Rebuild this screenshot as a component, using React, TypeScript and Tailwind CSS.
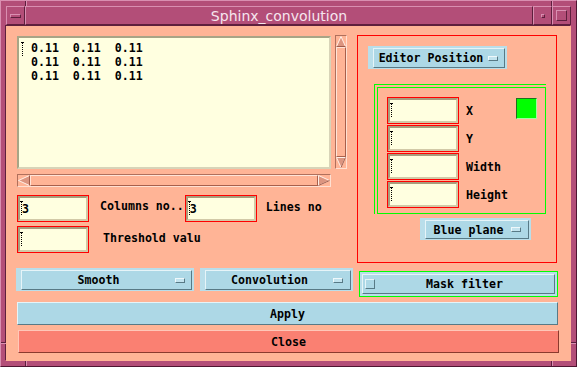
import React from "react";

const mono = "font-['DejaVu_Sans_Mono',monospace] font-bold text-[11.6px] leading-[14px] text-black";
const raisedBlue =
  "border border-t-[#e6f4f8] border-l-[#e6f4f8] border-b-[#587a86] border-r-[#587a86]";
const raisedMauve =
  "border border-t-[#d98fb1] border-l-[#d98fb1] border-b-[#5e1f3d] border-r-[#5e1f3d]";

const Cursor = ({ className = "" }: { className?: string }) => (
  <span className={`absolute flex flex-col items-center w-[3px] ${className}`}>
    <span className="w-[3px] h-[1px] bg-black" />
    <span className="w-0 h-full border-l border-dotted border-black" />
  </span>
);

const Field = ({ value = "" }: { value?: string }) => (
  <div className="w-[72px] h-[27px] shrink-0 border border-[#ff0000]">
    <div className="relative h-full bg-[#ffffe0] border-2 border-t-[#a99c7c] border-l-[#a99c7c] border-b-[#d2c9a7] border-r-[#d2c9a7] flex items-center">
      <Cursor className="left-[0px] top-[3px] h-[14px]" />
      <span className={`${mono} pl-[2px]`}>{value}</span>
    </div>
  </div>
);

const OptionMenu = ({ label, className = "", mr = "mr-[6px]" }: { label: string; className?: string; mr?: string }) => (
  <div className={`bg-[#b9deea] pl-[5px] pt-[2px] pr-[2px] pb-[1px] shrink-0 ${className}`}>
    <div className={`h-full bg-[#add8e6] ${raisedBlue} flex items-center`}>
      <span className={`${mono} flex-1 text-center whitespace-pre`}>{label}</span>
      <span className={`w-[10px] h-[5px] bg-[#c2e3ee] border border-t-[#eef8fb] border-l-[#eef8fb] border-b-[#587a86] border-r-[#587a86] ${mr}`} />
    </div>
  </div>
);

const Arrow = ({ dir, w, h }: { dir: "up" | "down" | "left" | "right"; w: number; h: number }) => {
  const pts = {
    up: `${w / 2},0.5 ${w - 0.5},${h - 0.5} 0.5,${h - 0.5}`,
    down: `0.5,0.5 ${w - 0.5},0.5 ${w / 2},${h - 0.5}`,
    left: `0.5,${h / 2} ${w - 0.5},0.5 ${w - 0.5},${h - 0.5}`,
    right: `0.5,0.5 ${w - 0.5},${h / 2} 0.5,${h - 0.5}`,
  }[dir];
  return (
    <svg width={w} height={h} className="shrink-0 block">
      <polygon points={pts} fill="#dc9580" stroke="#fff0e8" strokeWidth="1" />
      {dir === "up" && <line x1="0.5" y1={h - 0.5} x2={w - 0.5} y2={h - 0.5} stroke="#a15a48" />}
      {dir === "down" && <line x1={w - 0.5} y1="0.5" x2={w / 2} y2={h - 0.5} stroke="#a15a48" />}
      {dir === "left" && <line x1={w - 0.5} y1="0.5" x2={w - 0.5} y2={h - 0.5} stroke="#a15a48" />}
      {dir === "right" && <line x1="0.5" y1={h - 0.5} x2={w - 0.5} y2={h / 2} stroke="#a15a48" />}
    </svg>
  );
};

const troughCls =
  "border border-t-[#b0705c] border-l-[#b0705c] border-b-[#ffe0d2] border-r-[#ffe0d2]";
const sliderCls =
  "border border-t-[#ffe4d8] border-l-[#ffe4d8] border-b-[#a8604c] border-r-[#a8604c]";

export default function App() {
  const text = " 0.11  0.11  0.11\n 0.11  0.11  0.11\n 0.11  0.11  0.11";
  return (
    <div className="relative w-[577px] h-[367px] bg-[#b34e78] border border-t-[#d98fb1] border-l-[#d98fb1] border-b-[#4e1632] border-r-[#4e1632] p-[5px] flex flex-col overflow-hidden">
      {/* frame notches */}
      <span className="absolute left-[24px] top-0 w-[1px] h-[5px] bg-[#5e1f3d]" />
      <span className="absolute left-[25px] top-0 w-[1px] h-[5px] bg-[#d98fb1]" />
      <span className="absolute left-[550px] top-0 w-[1px] h-[5px] bg-[#5e1f3d]" />
      <span className="absolute left-[551px] top-0 w-[1px] h-[5px] bg-[#d98fb1]" />
      <span className="absolute left-[24px] bottom-0 w-[1px] h-[5px] bg-[#5e1f3d]" />
      <span className="absolute left-[25px] bottom-0 w-[1px] h-[5px] bg-[#d98fb1]" />
      <span className="absolute left-[550px] bottom-0 w-[1px] h-[5px] bg-[#5e1f3d]" />
      <span className="absolute left-[551px] bottom-0 w-[1px] h-[5px] bg-[#d98fb1]" />
      <span className="absolute left-0 top-[341px] w-[5px] h-[1px] bg-[#5e1f3d]" />
      <span className="absolute left-0 top-[342px] w-[5px] h-[1px] bg-[#d98fb1]" />
      <span className="absolute right-0 top-[341px] w-[5px] h-[1px] bg-[#5e1f3d]" />
      <span className="absolute right-0 top-[342px] w-[5px] h-[1px] bg-[#d98fb1]" />

      {/* title bar */}
      <div className="flex h-[19px] shrink-0">
        <div className={`w-[19px] ${raisedMauve} flex items-center justify-center`}>
          <div className={`w-[11px] h-[4px] ${raisedMauve}`} />
        </div>
        <div className={`flex-1 ${raisedMauve} flex items-center justify-center text-[#f6e6ee] font-['DejaVu_Sans',sans-serif] text-[14px] leading-none`}>
          Sphinx_convolution
        </div>
        <div className={`w-[19px] ${raisedMauve} flex items-center justify-center`}>
          <div className={`w-[4px] h-[4px] ${raisedMauve}`} />
        </div>
        <div className={`w-[19px] ${raisedMauve} flex items-center justify-center`}>
          <div className={`w-[11px] h-[11px] ${raisedMauve}`} />
        </div>
      </div>

      {/* content */}
      <div className="mt-[1px] flex-1 bg-[#ffb496] shadow-[-1px_-1px_0_0_#5e1f3d] flex flex-col pl-[11px] pr-[13px] pt-[9px]">
        <div className="flex h-[228px]">
          {/* left column */}
          <div className="w-[330px] flex flex-col">
            <div className="flex">
              <div className="relative w-[314px] h-[133px] mt-[1px] bg-[#ffffe0] border-2 border-t-[#a8a486] border-l-[#a8a486] border-b-[#d8d4b8] border-r-[#d8d4b8]">
                <Cursor className="left-[2px] top-[4px] h-[14px]" />
                <pre className={`${mono} pl-[5px] pt-[3px] m-0`}>{text}</pre>
              </div>
              <div className={`w-[12px] h-[134px] ml-[4px] ${troughCls} flex flex-col`}>
                <Arrow dir="up" w={10} h={11} />
                <div className={`flex-1 ${sliderCls}`} />
                <Arrow dir="down" w={10} h={11} />
              </div>
            </div>
            <div className={`w-[314px] h-[13px] mt-[5px] ${troughCls} flex`}>
              <Arrow dir="left" w={12} h={11} />
              <div className={`flex-1 ${sliderCls}`} />
              <Arrow dir="right" w={12} h={11} />
            </div>
            <div className="flex mt-[8px] h-[27px]">
              <Field value="3" />
              <span className={`${mono} ml-[11px] mt-[4px] whitespace-pre`}>Columns no..</span>
              <div className="ml-[1px]">
                <Field value="3" />
              </div>
              <span className={`${mono} ml-[9px] mt-[5px]`}>Lines no</span>
            </div>
            <div className="flex mt-[4px] h-[27px]">
              <Field />
              <span className={`${mono} ml-[14px] mt-[5px]`}>Threshold valu</span>
            </div>
          </div>

          {/* right panel */}
          <div className="ml-[10px] w-[200px] h-[228px] border border-[#ff0000] flex flex-col pl-[10px] pt-[10px]">
            <OptionMenu label="Editor Position" className="w-[139px] h-[23px]" mr="mr-[6px]" />
            <div className="mt-[15px] ml-[6px] w-[172px] border-l border-t border-[#00ff00]">
              <div className="ml-[2px] mt-[2px] w-[169px] h-[127px] border border-[#00ff00] flex flex-col gap-[1px] pl-[9px] pt-[9px]">
                {["X", "Y", "Width", "Height"].map((l, i) => (
                  <div key={l} className="flex h-[27px] items-center">
                    <Field />
                    <span className={`${mono} ml-[7px] w-[50px]`}>{l}</span>
                    {i === 0 && (
                      <span className="self-start mt-[1px] w-[21px] h-[21px] bg-[#00ff00] border border-t-[#1f6f1f] border-l-[#1f6f1f] border-b-[#9dff9d] border-r-[#9dff9d]" />
                    )}
                  </div>
                ))}
              </div>
            </div>
            <OptionMenu label="Blue plane" className="mt-[4px] ml-[52px] w-[111px] h-[22px]" mr="mr-[7px]" />
          </div>
        </div>

        {/* option row */}
        <div className="flex mt-[5px] h-[30px] items-start">
          <OptionMenu label="Smooth" className="-ml-[1px] w-[178px] h-[23px]" mr="mr-[6px]" />
          <OptionMenu label="Convolution" className="ml-[6px] w-[153px] h-[23px]" mr="mr-[7px]" />
          <div className="ml-[6px] mt-[3px] w-[200px] h-[26px] border border-[#00ff00] p-[2px] bg-[#b9deea]">
            <div className={`h-full bg-[#add8e6] ${raisedBlue} flex items-center`}>
              <span className={`w-[10px] h-[10px] ml-[2px] bg-[#add8e6] ${raisedBlue}`} />
              <span className={`${mono} flex-1 text-center`}>Mask filter</span>
            </div>
          </div>
        </div>

        <div className={`mt-[4px] h-[23px] bg-[#add8e6] ${raisedBlue} flex items-center justify-center`}>
          <span className={mono}>Apply</span>
        </div>
        <div className="mt-[5px] ml-[1px] -mr-[1px] h-[23px] bg-[#fa8072] border border-t-[#ffc7b8] border-l-[#ffc7b8] border-b-[#8a3a2e] border-r-[#8a3a2e] flex items-center justify-center">
          <span className={mono}>Close</span>
        </div>
      </div>
    </div>
  );
}
